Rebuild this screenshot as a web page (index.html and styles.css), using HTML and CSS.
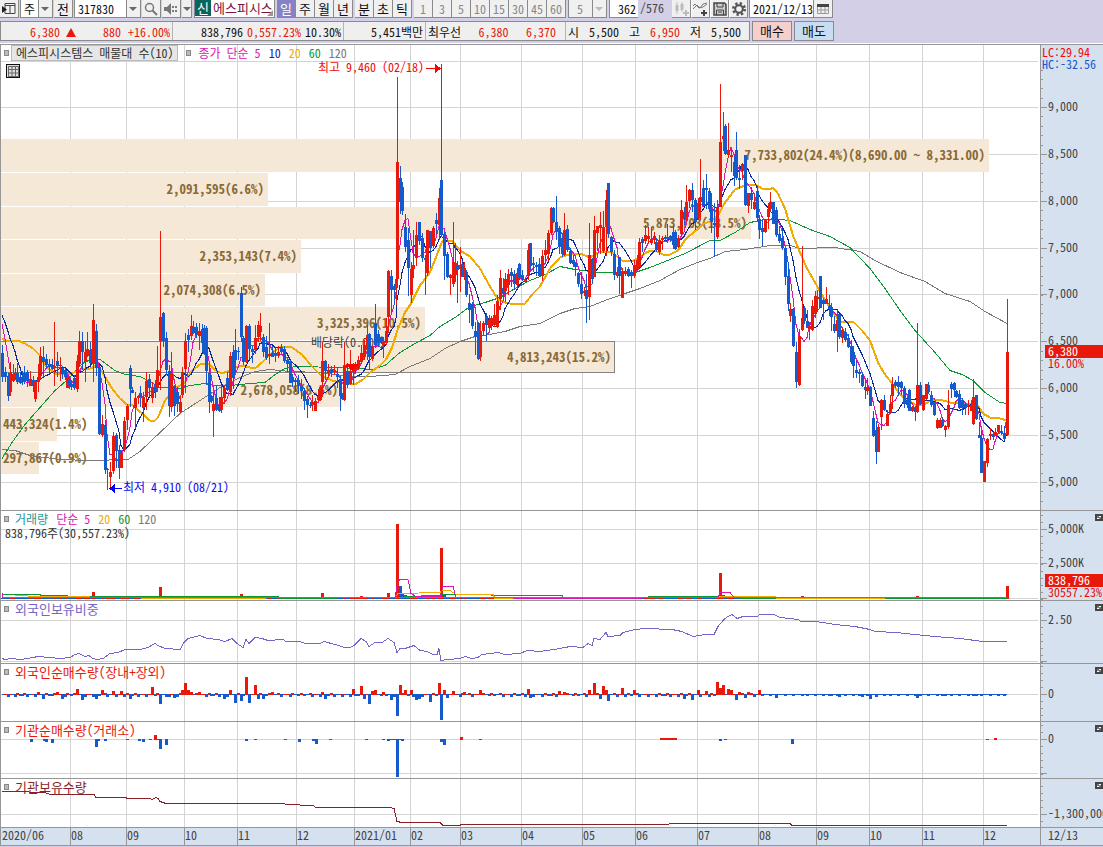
FILE: index.html
```html
<!DOCTYPE html>
<html lang="ko">

<head>
    <meta charset="UTF-8">
    <meta name="viewport" content="width=device-width, initial-scale=1.0">
    <title>에스피시스템스 317830</title>
    <link rel="stylesheet" href="styles.css">
</head>

<body>
    <div class="toolbar">
        <button class="tool wide" type="button" aria-label="창 목록">
            <svg width="14" height="13" viewBox="0 0 14 13"><path d="M3 1.500h10v10H3zM3 3.500h10M8 3.500v8" fill="none" stroke="#444" /><path d="M0 4l5 3.500-5 3.500z" fill="#222" /></svg>
        </button>
        <div class="combo period">
            <select aria-label="종류"><option>주</option></select>
        </div>
        <button class="tool wide" type="button">전</button>
        <div class="combo code">
            <input type="text" value="317830" aria-label="종목코드">
        </div>
        <button class="tool" type="button" aria-label="검색">
            <svg width="14" height="14" viewBox="0 0 14 14"><circle cx="5.500" cy="5.500" r="4" fill="none" stroke="#777" stroke-width="1.500" /><path d="M8.500 8.500l4.500 4.500" stroke="#777" stroke-width="2" /></svg>
        </button>
        <button class="tool" type="button" aria-label="음성">
            <svg width="14" height="12" viewBox="0 0 14 12"><path d="M0 4h3l4-4v12L3 8H0z" fill="#777" /><path d="M9 3v2M9 7v2M12 3v2M12 7v2" stroke="#555" stroke-width="1.500" /></svg>
        </button>
        <button class="tool slim" type="button" aria-label="음성 메뉴"><i class="down"></i></button>
        <div class="stock"><b>신</b><span>에스피시스</span></div>
        <div class="group">
            <button class="tool active" type="button">일</button>
            <button class="tool" type="button">주</button>
            <button class="tool" type="button">월</button>
            <button class="tool" type="button">년</button>
        </div>
        <div class="group">
            <button class="tool" type="button">분</button>
            <button class="tool" type="button">초</button>
            <button class="tool" type="button">틱</button>
        </div>
        <div class="group minutes">
            <button class="tool" type="button">1</button>
            <button class="tool" type="button">3</button>
            <button class="tool" type="button">5</button>
            <button class="tool" type="button">10</button>
            <button class="tool" type="button">15</button>
            <button class="tool" type="button">30</button>
            <button class="tool" type="button">45</button>
            <button class="tool" type="button">60</button>
        </div>
        <div class="combo tick off">
            <select aria-label="분 간격" disabled><option>5</option></select>
        </div>
        <div class="count">
            <input type="text" value="362" aria-label="봉 개수"><span>/576</span>
        </div>
        <div class="group icons">
            <button class="tool off" type="button" aria-label="봉 추가">
                <svg width="15" height="14" viewBox="0 0 15 14"><path d="M3 0v12M8 0v10" stroke="#bbb" /><path d="M1.500 3h3v6h-3zM6.500 2h3v6h-3zM11 8h2v2h2v2h-2v2h-2v-2H9v-2h2z" fill="#bbb" /></svg>
            </button>
            <button class="tool" type="button" aria-label="지표 추가">
                <svg width="15" height="14" viewBox="0 0 15 14"><path d="M0 7l4-4 3 3 3-4 4-1M0 4l2-2 4 4 4-1 4-3" fill="none" stroke="#777" /><path d="M10 8h2v2h2v2h-2v2h-2v-2H8v-2h2z" fill="#444" /></svg>
            </button>
            <button class="tool" type="button" aria-label="저장">
                <svg width="14" height="14" viewBox="0 0 14 14"><path d="M1 1h10.500L13 2.500V13H1z" fill="#ccc" stroke="#444" stroke-width="1.500" /><path d="M4 1v4h6V1M3.500 13V8h7v5M5 10h4" fill="none" stroke="#444" /></svg>
            </button>
            <button class="tool" type="button" aria-label="설정">
                <svg width="14" height="14" viewBox="0 0 14 14"><circle cx="7" cy="7" r="5.500" fill="none" stroke="#555" stroke-width="3" stroke-dasharray="2.200 2.120" /><circle cx="7" cy="7" r="3.800" fill="none" stroke="#555" stroke-width="2" /></svg>
            </button>
        </div>
        <div class="date">
            <input type="text" value="2021/12/13" aria-label="일자">
            <button class="tool" type="button" aria-label="달력">
                <svg width="12" height="11" viewBox="0 0 12 11"><path d="M0 1h12v3H0z" fill="#444" /><path d="M.5 4v6.500h11V4M4 4v6M8 4v6M1 7h10" fill="none" stroke="#999" /></svg>
            </button>
        </div>
    </div>

    <div class="quote">
        <div class="cells">
            <div class="cell price up"><span>6,380 <i class="rise"></i></span><span class="diff">880</span><span>+16.00%</span></div>
            <div class="cell volume"><span>838,796</span><span class="up">0,557.23%</span><span>10.30%</span></div>
            <div class="cell amount">5,451백만</div>
            <div class="cell best"><span>최우선</span><span class="up">6,380</span><span class="up">6,370</span></div>
            <div class="cell range"><span>시</span><span>5,500</span><span>고</span><span class="up">6,950</span><span>저</span><span>5,500</span></div>
        </div>
        <button class="order buy" type="button">매수</button>
        <button class="order sell" type="button">매도</button>
    </div>

    <main class="chart">
        <section class="panel main">
            <svg class="plot" data-top="45" data-height="465"></svg>
            <svg class="scale" data-top="45" data-height="465"></svg>
            <div class="legend">
                <i class="mark"></i><span class="box">에스피시스템스 매물대 수(10)</span>
                <i class="mark second"></i><span class="ma5">종가 단순 5</span><span class="ma10">10</span><span class="ma20">20</span><span class="ma60">60</span><span class="ma120">120</span>
            </div>
            <button class="grid-button" type="button" aria-label="데이터 표">
                <svg width="11" height="11" viewBox="0 0 11 11"><path d="M.5.5h10v10H.5zM.5 3.500h10M.5 7h10M4 .5v10M7.500.5v10" fill="none" stroke="#666" /></svg>
            </button>
        </section>
        <section class="panel vol">
            <svg class="plot" data-top="511" data-height="89"></svg>
            <svg class="scale" data-top="511" data-height="89"></svg>
            <div class="legend"><i class="mark"></i><span class="teal">거래량</span><span class="ma5">단순 5</span><span class="ma20">20</span><span class="ma60">60</span><span class="ma120">120</span></div>
            <div class="note">838,796주(30,557.23%)</div>
            <button class="close" type="button" aria-label="닫기"></button>
        </section>
        <section class="panel hold">
            <svg class="plot" data-top="601" data-height="62"></svg>
            <svg class="scale" data-top="601" data-height="62"></svg>
            <div class="legend name"><i class="mark"></i><span class="violet">외국인보유비중</span></div>
            <button class="close" type="button" aria-label="닫기"></button>
        </section>
        <section class="panel net">
            <svg class="plot" data-top="664" data-height="57"></svg>
            <svg class="scale" data-top="664" data-height="57"></svg>
            <div class="legend name"><i class="mark"></i><span class="up">외국인순매수량(장내+장외)</span></div>
            <button class="close" type="button" aria-label="닫기"></button>
        </section>
        <section class="panel inst">
            <svg class="plot" data-top="722" data-height="56"></svg>
            <svg class="scale" data-top="722" data-height="56"></svg>
            <div class="legend name"><i class="mark"></i><span class="up">기관순매수량(거래소)</span></div>
            <button class="close" type="button" aria-label="닫기"></button>
        </section>
        <section class="panel inst-hold">
            <svg class="plot" data-top="779" data-height="48"></svg>
            <svg class="scale" data-top="779" data-height="48"></svg>
            <div class="legend name"><i class="mark"></i><span class="wine">기관보유수량</span></div>
            <button class="close" type="button" aria-label="닫기"></button>
        </section>
        <section class="panel months">
            <svg class="plot" data-top="828" data-height="17"></svg>
            <svg class="scale" data-top="828" data-height="17"></svg>
        </section>
    </main>

    <script src="chart.js"></script>
</body>

</html>
```

FILE: styles.css
```css
* {
    box-sizing: border-box;
}

body {
    margin: 0;
    background-color: #d2cfe6;
    color: #111;
    font-family: "Liberation Sans Narrow", "Noto Sans Mono CJK KR", "Noto Sans CJK KR", sans-serif;
    font-size: 12px;
    line-height: 16px;
}

button,
input,
select {
    margin: 0;
    padding: 0;
    border: 0;
    border-radius: 0;
    background: none;
    color: inherit;
    font: inherit;
}

svg {
    display: block;
}

/* toolbar */
.toolbar {
    display: flex;
    height: 18px;
    gap: 1px;
    overflow: hidden;
    white-space: nowrap;
}

.tool {
    display: flex;
    align-items: center;
    justify-content: center;
    flex: none;
    width: 19px;
    height: 18px;
    background-color: #f0f0f0;
    border: solid #8a8a8a;
    border-width: 0 1px 1px 0;
    font-size: 13px;
}

.tool.slim {
    width: 10px;
}

.tool.active {
    background-color: #8782c4;
    color: #fff;
}

.down,
.combo::after {
    width: 0;
    border: 4px solid transparent;
    border-top-color: #666;
    border-bottom: 0;
}

.combo {
    display: flex;
    align-items: center;
    position: relative;
    flex: none;
    height: 18px;
    background-color: #fff;
    border: 1px solid #8a8a8a;
    border-top: 0;
}

.combo::after {
    content: "";
    position: absolute;
    right: 3px;
}

.combo select,
.combo input {
    appearance: none;
    width: 100%;
    height: 17px;
    padding-left: 3px;
    opacity: 1;
    background: linear-gradient(90deg, transparent calc(100% - 14px), #8a8a8a calc(100% - 14px), #8a8a8a calc(100% - 13px), #f0f0f0 calc(100% - 13px));
}

.period {
    width: 33px;
}

.code {
    width: 67px;
}

.tick {
    width: 39px;
    margin-left: 1px;
    color: #888;
}

.tick select {
    padding-left: 8px;
    background-color: #f0f0f0;
}

.off.combo::after {
    border-top-color: #bbb;
}

.stock {
    display: flex;
    position: relative;
    flex: none;
    width: 81px;
    height: 18px;
    margin-left: 1px;
    overflow: hidden;
    background-color: #fff;
    border: 1px solid #8a8a8a;
    border-top: 0;
    color: #7c1440;
    font-size: 13px;
    line-height: 16px;
}

.stock b {
    width: 16px;
    height: 16px;
    margin-right: 2px;
    background-color: #0a645c;
    color: #fff;
    font-weight: normal;
    text-align: center;
}

.stock::after {
    content: "";
    position: absolute;
    right: 1px;
    bottom: 1px;
    border: 3px solid #999;
    border-top-color: transparent;
    border-left-color: transparent;
}

.group {
    display: flex;
    flex: none;
    margin-left: 1px;
}

.minutes {
    color: #888;
}

.minutes .tool {
    font-size: 12px;
}

.count {
    display: flex;
    flex: none;
    width: 61px;
    margin-left: 1px;
    color: #444;
}

.count input {
    width: 29px;
    height: 18px;
    margin-right: 2px;
    padding-right: 2px;
    background-color: #fff;
    border-bottom: 1px solid #8a8a8a;
    border-left: 1px solid #8a8a8a;
    color: #111;
    text-align: right;
}

.icons .tool + .tool {
    border-left: 1px solid #fff;
}

.date {
    display: flex;
    flex: none;
}

.date input {
    width: 65px;
    height: 18px;
    padding-left: 3px;
    background-color: #fff;
    border: solid #8a8a8a;
    border-width: 0 1px 1px;
}

/* quote line */
.quote {
    display: flex;
    height: 26px;
    padding: 3px 0 3px;
    gap: 2px;
    border-bottom: 1px solid #fff;
    white-space: nowrap;
}

.cells {
    display: flex;
    height: 20px;
    background-color: #efefef;
    border: 1px solid #8a8a8a;
    line-height: 19px;
}

.cell {
    display: flex;
    justify-content: space-between;
    padding: 0 2px;
    border-right: 1px solid #b4b4b4;
}

.cell:last-child {
    border-right: 0;
}

.price {
    width: 172px;
    padding-left: 29px;
}

.diff {
    margin-left: 20px;
}

.volume {
    width: 171px;
    padding-left: 28px;
}

.amount {
    width: 82px;
    justify-content: flex-end;
}

.best {
    width: 140px;
    padding-right: 9px;
}

.range {
    width: 183px;
    padding-right: 8px;
}

.up {
    color: #e8190a;
}

.rise {
    display: inline-block;
    border: 5px solid transparent;
    border-top: 0;
    border-bottom: 9px solid #e8190a;
}

.order {
    width: 40px;
    height: 20px;
    border: 1px solid #8a8a8a;
    font-size: 13px;
}

.buy {
    background-color: #f4cfcb;
}

.sell {
    background-color: #c8ddf2;
}

/* chart */
.chart {
    background-color: #fff;
    border-left: 1px solid #969696;
    border-bottom: 1px solid #969696;
}

.panel {
    display: grid;
    grid-template-columns: minmax(0, 1fr) 63px;
    position: relative;
    border-top: 1px solid #969696;
}

.plot,
.scale {
    width: 100%;
    shape-rendering: crispEdges;
}

.scale {
    background-color: #d6e1f0;
    border-left: 1px solid #969696;
}

.months .plot {
    background-color: #d6e1f0;
}

.legend {
    display: flex;
    align-items: center;
    position: absolute;
    top: 0;
    left: 3px;
    gap: 8px;
    white-space: nowrap;
}

.legend.name {
    font-size: 13px;
}

.legend .mark {
    width: 5px;
    height: 6px;
    margin-right: -2px;
    background-color: #bbb;
    border: 1px solid #888;
}

.main .mark {
    margin-right: -6px;
}

.main .second {
    margin-right: -1px;
}

.box {
    padding: 0 4px;
    background-color: #e6e6e6;
    border: 1px solid #bbb;
    line-height: 14px;
    color: #333;
}

.note {
    position: absolute;
    top: 14px;
    left: 4px;
    color: #333;
}

.ma5 { color: #dc14b4; }
.ma10 { color: #0a28b4; }
.ma20 { color: #f0aa00; }
.ma60 { color: #0a9632; }
.ma120 { color: #787878; }
.teal { color: #289696; }
.violet { color: #7864c8; }
.wine { color: #8c1e28; }

.grid-button {
    display: flex;
    align-items: center;
    justify-content: center;
    position: absolute;
    top: 19px;
    left: 5px;
    width: 14px;
    height: 14px;
    border: 1px solid #111;
    background-color: #ddd;
}

.close {
    position: absolute;
    top: 3px;
    right: 0;
    width: 8px;
    height: 7px;
    background-color: #444;
    color: #fff;
}

.close::before {
    content: "";
    position: absolute;
    top: 2px;
    left: 2px;
    width: 4px;
    height: 3px;
    background: conic-gradient(#fff 25%, #777 0 50%, #fff 0 75%, #777 0);
}

.plot text,
.scale text {
    fill: #444;
}

.plot .band {
    fill: #f5e8d6;
}

.plot .band.picked {
    stroke: #828282;
}

.plot .share {
    fill: #8a6a36;
    font-size: 13px;
    font-weight: bold;
}

.grid {
    stroke: #d4d4d4;
}

.tickline {
    stroke: #969696;
}

.line {
    fill: none;
}

.scale .badge {
    fill: #e8190a;
}

.scale .on {
    fill: #fff;
}

.scale .rate,
.plot .high {
    fill: #f00a0a;
}

.scale .fall {
    fill: #145acd;
}

.plot .low {
    fill: #0a0af0;
}
```

FILE: chart.js
```javascript
const RED = '#e8190a';
const BLUE = '#145acd';
const BASE_WIDTH = 1039;

// x, up/down, high, body top, body bottom, low
const candles = `
2 b 345 353 377 382|5 b 367 372 377 382|8 b 373 376 396 401|10 r 362 373 392 396|13 r 364 374 381 382|15 r 368 373 380 380
17 b 363 373 382 384|20 b 372 377 383 384|22 b 371 379 382 385|24 b 366 373 382 384|27 b 370 372 381 387|30 r 371 379 386 386
33 b 376 380 386 392|35 r 380 381 399 402|38 r 364 377 382 392|40 r 347 356 376 380|43 b 346 357 362 377|46 b 354 359 365 368
49 b 359 364 367 374|52 b 359 365 369 370|54 r 322 367 368 386|57 b 352 361 366 377|60 r 357 365 366 381|62 b 366 368 374 379
65 b 368 370 377 380|67 r 375 377 388 388|69 b 377 379 385 389|71 b 381 384 387 390|74 b 375 378 388 390|77 r 355 361 389 392
79 r 331 341 364 366|82 b 332 341 352 370|85 r 341 352 362 382|87 r 332 349 356 357|90 b 342 350 363 364|93 r 304 320 364 382
96 b 324 331 368 376|99 b 365 367 434 435|102 r 415 424 435 437|105 b 420 425 470 474|107 r 468 469 470 490|110 r 462 472 477 490
113 r 432 436 471 474|116 b 433 435 451 468|119 b 445 450 468 479|121 r 450 453 468 468|124 r 417 421 450 452|127 r 404 406 420 430
130 b 365 368 389 407|132 b 387 390 393 393|135 r 392 398 408 428|138 r 395 396 398 404|140 b 386 393 398 407|143 r 392 397 408 422
146 r 372 381 397 410|149 b 374 379 388 397|152 r 382 387 398 403|155 b 380 384 392 398|157 r 346 370 388 392|160 r 231 317 341 390
163 b 312 313 341 347|166 b 332 338 370 375|169 b 365 371 406 417|171 r 352 373 407 412|174 b 385 386 406 416|177 b 387 392 404 412
180 r 396 402 412 413|182 r 367 372 395 398|185 r 333 341 369 393|188 b 329 335 340 352|191 r 315 326 336 340|193 b 321 327 333 334
196 b 323 327 335 338|199 r 323 331 336 350|202 b 324 329 343 352|204 b 325 328 354 355|206 b 326 328 371 385|209 b 366 373 402 413
211 b 395 396 401 403|213 r 392 404 411 437|216 b 386 398 410 411|219 b 397 405 411 412|221 r 386 397 410 413|224 r 385 388 398 404
227 b 372 378 390 391|230 r 352 356 392 396|233 b 345 352 378 389|235 b 329 350 360 373|238 b 347 351 352 360|241 b 287 293 337 342
243 b 336 338 362 365|246 r 325 326 362 363|249 b 324 326 349 359|252 b 346 349 352 363|255 r 325 338 350 354|258 r 321 325 337 342
260 r 313 326 332 341|263 b 334 337 352 357|266 b 336 347 358 360|269 r 323 354 356 364|272 b 346 353 357 357|275 b 348 353 355 362
278 r 346 352 355 358|281 b 344 347 352 354|284 b 346 349 361 363|287 b 359 360 364 372|290 b 360 362 383 383|292 b 374 377 382 387
295 b 378 380 382 392|298 b 375 380 386 394|301 b 379 386 391 399|304 b 388 391 401 410|307 b 396 399 405 418|310 b 402 405 406 408
312 r 395 402 405 411|315 r 398 401 411 411|318 r 389 396 400 402|320 r 386 387 400 401|322 r 342 361 382 397|325 b 360 361 371 380
328 r 364 370 373 377|331 b 366 369 373 377|334 r 365 370 372 375|337 b 367 374 377 388|340 b 376 379 396 411|342 b 393 396 399 400
344 r 342 365 400 401|347 b 363 371 385 388|350 r 350 371 384 385|353 r 363 365 372 385|355 r 362 364 370 374|358 r 356 360 368 370
361 r 345 353 362 364|364 r 340 345 357 360|367 r 325 335 350 360|369 b 333 334 357 370|372 r 346 347 359 361|375 b 304 323 345 348
378 b 330 334 343 347|381 b 337 337 343 344|383 r 337 341 345 358|386 r 318 331 343 345|388 r 270 271 317 333|391 b 270 276 290 313
394 b 284 286 290 305|396 r 278 279 288 305|397 r 77 162 279 288|400 b 166 178 202 214|402 b 182 187 211 215|405 b 214 227 247 252
408 b 228 240 268 296|411 r 262 269 295 303|413 r 230 265 269 278|416 r 222 235 258 266|419 b 222 222 241 245|422 b 233 238 258 262
425 b 255 258 260 295|427 r 230 230 273 276|430 b 231 231 248 268|433 r 226 228 246 248|436 b 213 220 224 234|439 r 188 198 225 240
441 b 64 180 235 237|444 b 232 234 256 280|447 b 252 254 277 278|450 r 274 275 278 295|453 r 222 262 284 287|455 r 243 263 275 282
457 b 261 265 270 303|460 r 247 265 269 292|462 b 261 264 277 277|464 r 262 268 274 280|466 b 270 272 295 297|469 b 294 303 310 323
472 b 302 304 326 329|475 b 322 331 337 355|478 b 322 323 359 360|480 r 321 331 357 361|483 r 321 323 331 335|486 b 313 316 325 341
489 r 315 320 328 329|491 r 316 318 325 330|494 r 304 315 325 327|497 r 295 301 327 328|500 r 270 278 299 310|503 b 278 288 294 301
505 r 273 279 291 302|508 r 269 274 285 295|511 b 268 272 276 287|514 b 270 274 284 290|517 r 268 273 285 289|519 b 263 264 277 280
522 b 270 275 280 281|525 r 278 280 282 283|528 r 244 250 276 280|530 b 243 243 266 270|533 b 257 263 265 272|536 b 262 265 267 276
539 b 258 264 276 277|542 r 250 256 276 281|545 r 240 250 255 264|548 r 230 233 254 261|551 r 207 208 233 235|553 b 207 208 222 223
556 b 196 222 232 240|559 b 226 228 247 254|562 b 233 238 254 257|564 r 213 230 255 256|567 b 225 229 250 252|570 b 248 251 263 264
573 b 255 260 264 267|575 b 262 263 267 276|578 b 272 273 284 287|581 b 272 284 294 299|584 r 287 291 293 296|586 b 274 290 299 323
589 r 223 255 297 320|592 b 258 259 279 284|594 r 216 230 277 277|597 r 226 226 233 251|600 r 212 225 228 254|603 r 211 227 251 253
606 r 190 200 224 256|608 b 183 183 234 238|611 b 236 237 252 256|614 b 250 254 275 280|617 r 267 272 276 278|619 b 257 257 276 294
622 r 268 271 298 298|625 r 267 271 274 276|628 b 267 269 276 277|631 b 270 272 276 288|634 r 260 265 276 278|637 r 255 260 270 272
639 r 238 242 267 268|642 b 237 239 243 252|645 r 225 235 241 244|648 r 227 236 239 243|651 r 227 240 243 245|654 r 232 236 240 244
656 b 238 242 250 252|659 r 235 240 252 255|662 r 236 238 240 250|665 b 235 237 239 242|667 b 224 237 239 243|670 b 235 236 240 242
673 b 226 232 245 249|675 b 230 232 249 250|678 r 235 238 247 248|681 r 200 210 234 236|684 b 207 212 219 225|686 r 185 202 220 222
689 r 189 190 201 208|692 b 183 190 200 212|695 b 198 200 222 230|698 r 198 203 218 220|700 r 159 197 202 220|703 b 180 188 206 207
706 b 174 188 190 209|709 b 188 191 209 212|711 b 193 209 222 233|714 b 203 223 225 257|717 r 200 207 237 239|720 r 84 142 207 207
723 r 112 136 139 151|725 b 124 126 154 155|728 r 123 150 155 158|731 r 148 155 157 172|734 b 155 162 176 186|736 b 132 150 178 180
739 b 165 178 180 189|742 r 163 164 171 180|745 b 155 155 205 206|748 r 193 193 206 213|751 b 187 193 200 209|754 r 193 202 209 210
757 b 186 191 218 221|759 b 215 219 230 239|762 b 219 228 232 246|765 r 219 220 232 233|768 r 203 209 217 229|770 r 192 202 209 212
773 b 202 202 224 224|776 b 207 210 235 237|779 b 226 234 241 243|782 b 229 238 248 250|785 b 248 248 277 285|788 b 262 276 304 311
790 r 303 309 316 322|793 b 308 309 346 347|796 b 342 352 382 388|799 r 329 336 385 386|802 r 246 318 330 331|804 b 306 308 321 324
807 b 310 321 328 328|809 r 322 326 329 340|812 r 300 306 330 331|815 r 291 296 314 318|817 r 290 297 299 312|820 b 276 276 308 308
823 b 298 300 304 320|826 r 287 299 304 304|829 b 295 306 309 316|831 b 303 307 317 331|834 b 316 324 331 333|837 r 310 320 331 352
839 b 314 314 337 339|842 r 327 330 338 343|845 b 328 332 340 342|848 b 334 338 347 348|851 b 340 346 362 364|853 b 346 352 366 378
856 b 361 370 373 378|859 b 369 372 374 383|862 b 372 375 386 387|865 b 380 387 390 399|867 r 378 387 391 395|870 b 386 387 406 406
873 b 411 418 436 437|876 b 421 430 452 464|878 r 424 427 452 452|881 r 399 400 417 430|884 b 395 400 410 411|887 r 410 414 426 426
890 r 395 404 413 414|892 r 377 384 396 409|895 b 380 382 386 388|898 b 376 382 387 396|901 b 381 382 388 395|904 b 386 388 404 408
907 b 397 400 405 408|909 b 389 390 411 411|912 r 406 407 411 412|915 b 407 408 412 421|917 r 323 385 412 413|920 b 382 385 404 405
923 r 395 395 410 411|926 r 384 384 399 400|928 b 382 385 392 394|931 b 391 395 405 407|934 b 402 402 415 416|937 r 418 420 428 429
940 r 418 420 428 428|942 b 418 420 426 427|945 r 425 426 430 437|948 r 390 405 427 429|951 b 382 384 389 398|954 b 382 383 390 397
956 b 390 391 397 398|959 b 390 394 408 409|962 b 398 400 408 415|965 b 402 404 408 415|968 r 400 406 407 415|971 r 400 405 411 411
973 r 379 397 424 425|976 b 395 395 419 420|979 b 422 435 438 438|981 b 431 438 473 473|984 r 461 461 482 482|987 r 438 439 463 467
990 r 428 434 436 440|993 b 432 434 437 440|995 r 428 432 436 436|998 r 425 425 432 433|1001 b 425 431 433 435|1004 b 426 433 439 440
1007 r 299 352 435 436`.trim().split(/[|\n]/).map(row => {
    const [x, side, high, top, bottom, low] = row.split(' ');
    return { x: +x, up: side === 'r', high: +high, top: +top, bottom: +bottom, low: +low };
});

const earlier = [306, 306, 306, 306, 306, 305, 308, 312, 318];

const ma20 = '2,338 5,340 18,340 25,343 33,348 40,355 45,365 55,373 70,374 80,369 90,368 97,365 105,376 112,388 120,398 127,404 133,405 142,413 150,420 154,421 158,417 165,400 175,388 185,382 192,370 200,364 208,363 216,370 222,373 230,370 240,365 255,368 262,362 272,352 282,346 292,347 302,354 312,366 320,374 332,380 345,383 355,384 363,379 370,372 380,365 386,359 392,347 398,328 405,312 411,303 420,285 430,272 437,254 442,241 452,240 460,250 470,256 480,268 490,286 498,299 505,302 515,304 525,303 533,293 540,286 550,268 560,257 572,253 580,253 590,257 600,251 612,252 622,260 632,261 642,255 650,250 657,251 663,254 670,254 678,250 686,238 696,230 704,223 710,221 718,215 725,202 735,189 745,185 755,184 762,188 770,189 773,187 778,193 785,208 793,235 800,252 807,268 815,282 823,296 833,312 840,321 853,321 862,330 870,340 878,362 885,374 893,384 900,394 908,400 915,404 923,405 930,400 940,399 950,402 965,403 977,404 983,413 990,417 1000,418 1007,420';
const ma60 = '2,458 12,442 25,424 40,407 55,390 70,377 80,365 90,359 100,359 115,370 125,374 140,376 150,381 160,387 170,387 180,388 190,385 205,383 215,385 230,385 250,383 265,382 275,374 285,368 296,366 340,367 372,369 385,365 400,352 415,343 430,335 440,326 455,317 470,306 485,302 500,297 515,288 530,280 545,274 560,266 575,269 600,272 635,272 650,267 665,261 685,253 710,240 720,240 735,232 750,222 765,219 780,219 790,220 810,229 830,236 850,247 870,268 885,288 900,310 915,330 925,341 935,352 950,370 962,374 973,380 985,392 1000,402 1007,403';
const ma120 = '2,449 15,450 30,455 60,459 90,460 128,459 140,451 160,432 180,413 200,400 220,387 240,377 255,371 270,369 290,371 320,372 350,376 370,376 395,374 410,366 430,358 445,348 460,341 475,336 490,334 505,331 520,326 540,323 560,313 575,308 590,306 605,300 625,293 640,288 660,280 680,269 700,261 710,258 725,251 745,249 770,245 790,245 800,248 835,247 860,251 875,260 900,272 925,281 945,293 970,301 985,311 1007,323';

const foreignHold = '2,658 5,659 12,658 20,659 28,658 38,656 50,657 60,658 70,657 75,654 79,653 85,656 89,655 93,658 97,659 103,658 110,653 118,652 125,649 140,649 148,647 155,643 158,645 165,648 180,649 184,642 188,638 200,635 207,638 218,639 225,641 232,638 237,643 243,647 246,639 249,643 255,637 262,638 268,640 283,639 286,641 300,641 305,643 320,643 324,641 335,644 345,647 350,647 354,645 361,638 366,641 369,646 375,642 382,642 388,638 394,642 397,652 400,648 405,648 414,645 420,650 427,651 433,654 437,654 439,648 441,660 448,659 460,658 465,656 472,658 478,657 482,654 498,652 505,654 520,653 527,650 540,651 560,648 570,646 583,647 588,643 592,645 594,638 600,639 606,632 608,636 620,635 623,632 635,629 645,628 672,629 682,631 693,636 705,634 714,634 718,626 724,619 728,616 732,614 737,618 743,616 757,616 760,614 774,614 780,617 798,619 801,621 816,621 835,624 855,626 870,629 875,631 897,632 905,633 915,634 925,635 935,636 960,638 983,641 1007,641';
const instHold = '2,791 28,791 30,792 45,792 50,794 94,794 96,797 126,797 127,798 150,798 152,799 156,797 158,798 160,801 166,803 284,803 286,804 313,805 316,807 390,807 394,808 397,821 402,822 440,822 443,825 460,825 461,824 668,824 670,823 790,823 792,825 1007,825';

const months = [[1, '2020/06'], [70, '08'], [126, '09'], [184, '10'], [237, '11'], [296, '12'], [354, '2021/01'], [410, '02'], [460, '03'], [521, '04'], [582, '05'], [635, '06'], [697, '07'], [758, '08'], [816, '09'], [869, '10'], [922, '11'], [983, '12']];

// top, bottom, width, label
const bands = [
    [139, 172, 989, '7,733,802(24.4%)(8,690.00 ~ 8,331.00)'],
    [173, 206, 268, '2,091,595(6.6%)'],
    [207, 239, 751, '5,873,703(18.5%)'],
    [240, 273, 301, '2,353,143(7.4%)'],
    [274, 306, 265, '2,074,308(6.5%)'],
    [307, 340, 425, '3,325,396(10.5%)'],
    [341, 373, 615, '4,813,243(15.2%)'],
    [374, 407, 342, '2,678,058(8.5%)'],
    [408, 441, 57, '443,324(1.4%)'],
    [442, 474, 39, '297,867(0.9%)']
];

const foreignNet = { 29: 2, 32: -2, 38: 3, 43: -4, 57: 3, 62: -4, 77: 6, 82: -5, 88: 3, 91: -5, 96: -4, 102: 5, 113: 4, 118: -3, 121: 4, 126: 3, 130: -4, 152: 8, 160: -9, 166: -2, 174: -3, 182: 5, 185: 12, 188: 5, 191: 3, 199: 3, 205: -3, 208: -3, 224: -4, 230: 5, 235: -8, 241: -6, 246: 18, 249: -8, 255: 10, 258: -4, 263: -4, 272: 3, 285: -5, 322: 3, 325: -4, 338: -4, 353: 6, 361: 9, 364: -4, 369: -9, 372: 4, 375: 5, 383: 3, 391: -5, 397: -21, 400: 10, 405: 5, 411: 5, 416: -5, 419: -4, 430: -7, 439: 12, 441: -25, 444: 5, 447: -3, 453: 4, 464: 3, 480: 5, 528: 6, 530: -3, 559: 4, 564: 3, 589: 5, 594: 12, 600: -4, 603: 9, 606: 5, 608: -6, 622: 7, 634: 5, 684: -4, 692: -5, 698: 5, 706: 4, 717: 13, 720: 7, 723: 10, 728: 6, 731: 5, 736: -5, 739: 3, 745: -3, 748: 3, 759: 5, 776: -3, 787: -3, 801: -6, 839: -2, 862: -2, 870: -4, 876: -2, 917: -3 };
const instNet = [[31, -3], [44, -2], [46, -3], [52, -4], [96, -8], [98, -2], [105, -2], [127, -1], [139, -2], [143, -3], [150, -1], [155, 5], [157, -1], [160, -10], [166, -6], [246, -2], [255, -1], [285, -1], [299, -3], [313, -2], [316, -5], [330, -1], [366, -1], [383, -1], [388, -2], [391, -1], [394, -1], [397, -38], [400, 1], [402, -2], [441, -3], [444, -6], [461, 3], [480, -1], [720, -2], [725, -1], [792, -5], [987, -1], [995, 2]];
const volumes = { 93: 7, 160: 12, 241: 5, 322: 6, 361: 3, 388: 6, 397: 75, 400: 13, 402: 6, 405: 4, 441: 51, 444: 5, 720: 26, 723: 4, 802: 3, 917: 3, 1007: 13 };
// days when volume grew although the candle is down
const busyDays = [241, 441];

const levels = {
    main: [61, 107, 154, 201, 248, 294, 341, 388, 435, 482],
    vol: [529, 563, 598],
    hold: [620, 661],
    net: [694],
    inst: [739, 773],
    'inst-hold': [814]
};

const labels = {
    main: [[107, '9,000'], [154, '8,500'], [201, '8,000'], [248, '7,500'], [294, '7,000'], [341, '6,500'], [388, '6,000'], [435, '5,500'], [482, '5,000']],
    vol: [[529, '5,000K'], [563, '2,500K']],
    hold: [[620, '2.50']],
    net: [[694, '0']],
    inst: [[739, '0']],
    'inst-hold': [[814, '-1,300,000']]
};

let k = 1;
const px = x => Math.round(1 + (x - 1) * k);

function rect(x, y, w, h, fill) {
    return `<rect x="${px(x)}" y="${y}" width="${w}" height="${h}" fill="${fill}"/>`;
}

function line(x1, y1, x2, y2, cls) {
    return `<path class="${cls}" d="M${x1} ${y1 + 0.5}L${x2} ${y2 + 0.5}"/>`;
}

function text(x, y, value, cls = '', anchor = 'start') {
    return `<text x="${x}" y="${y}" class="${cls}" text-anchor="${anchor}">${value}</text>`;
}

function curve(points, color, width = 1) {
    const scaled = points.split(' ').map(p => {
        const [x, y] = p.split(',');
        return px(+x) + ',' + (+y + 0.5);
    }).join(' ');
    return `<polyline class="line" points="${scaled}" stroke="${color}" stroke-width="${width}"/>`;
}

function average(days) {
    const closes = earlier.concat(candles.map(c => c.up ? c.top : c.bottom));
    return candles.map((c, i) => {
        const part = closes.slice(i + earlier.length - days + 1, i + earlier.length + 1);
        return c.x + ',' + Math.round(part.reduce((a, b) => a + b) / days);
    }).join(' ');
}

function drawMain() {
    let out = '';
    bands.forEach(([top, bottom, width], i) => {
        const picked = i === 6;
        out += `<rect class="band${picked ? ' picked' : ''}" x="${picked ? 0.5 : 1}" y="${top + (picked ? 0.5 : 0)}" width="${px(width) - 1}" height="${bottom - top - (picked ? 1 : 0)}"/>`;
    });
    bands.forEach(([top, , width, label]) => {
        out += width < 100 ? text(3, top + 21, label, 'share') : text(px(width) - 4, top + 21, label, 'share', 'end');
    });
    out += text(px(311), 347, '배당락(0.00%)');
    out += curve(ma120, '#787878') + curve(ma60, '#0a9632') + curve(ma20, '#f0aa00', 2);
    out += curve(average(10), '#0a28a0') + curve(average(5), '#dc14b4');
    candles.forEach(c => {
        const color = c.up ? RED : BLUE;
        out += rect(c.x, c.high, 1, c.low - c.high, color);
        out += rect(c.x - 1, c.top, 3, Math.max(1, c.bottom - c.top), color);
    });
    out += text(px(424), 72, '최고 9,460 (02/18)', 'high', 'end');
    out += `<path d="M${px(426)} 68h9v-4l6 4.500-6 4.500v-4h-9z" fill="#f00"/>`;
    out += text(px(123), 492, '최저 4,910 (08/21)', 'low');
    out += `<path d="M${px(122)} 488h-7v-4l-6 4.500 6 4.500v-4h7z" fill="#00f"/>`;
    out += `<path d="M${px(346)} 364h12v3h-3l-3 4-3-4h-3z" fill="#f00"/>`;
    return out;
}

function drawVolume() {
    let out = '';
    candles.forEach(c => {
        const h = volumes[c.x] || 1;
        out += rect(c.x - 1, 599 - h, 3, h, c.up || busyDays.includes(c.x) ? RED : BLUE);
    });
    out += curve('2,594 40,594 41,595 95,596 278,596 280,598 395,597 430,595 455,594 490,594 492,595 562,595 563,597 735,596 740,598 885,598 1007,598', '#0a9632');
    out += curve('15,595 40,596 140,597 142,598 395,597 398,593 440,592 442,590 450,590 456,594 493,594 495,598 660,597 718,597 720,596 775,596 777,598 885,598', '#f0aa00');
    out += curve('2,593 3,597 395,597 398,580 401,579 408,579 411,593 416,596 440,596 443,586 453,586 456,597 568,598 718,597 720,592 730,592 734,597', '#dc14b4');
    out += curve('2,597 1007,597', '#787878');
    return out;
}

function drawNet() {
    let out = rect(2, 694, px(1005), 1, BLUE);
    candles.forEach((c, i) => {
        const wave = Math.sin(i * 2.3);
        const h = foreignNet[c.x] || Math.round(c.x > 760 ? wave * 0.7 - 0.3 : wave * 2);
        if (h === 0) return;
        out += h > 0 ? rect(c.x - 1, 695 - h, 3, h, RED) : rect(c.x - 1, 694, 3, 1 - h, BLUE);
    });
    return out;
}

function drawInst() {
    return instNet.map(([x, h]) => h > 0 ? rect(x - 1, 740 - h, 3, h, RED) : rect(x - 1, 739, 3, -h, BLUE)).join('')
        + rect(660, 738, px(677) - px(660), 2, RED);
}

const painters = {
    main: drawMain,
    vol: drawVolume,
    hold: () => curve(foreignHold, '#7864c8'),
    net: drawNet,
    inst: drawInst,
    'inst-hold': () => curve(instHold, '#8c1e28'),
    months: () => months.map(([x, label]) => text(px(x) + 1, 840, label)).join('')
};

function drawScale(name, top, height) {
    let out = '';
    if (name === 'months') return text(7, 840, '12/13');
    const step = name === 'main' ? 9.375 : 7;
    const start = levels[name][name === 'main' ? 1 : 0];
    for (let i = -70; i < 70; i++) {
        const y = Math.round(start + i * step);
        if (y > top && y < top + height && !(name === 'main' && y < 64)) out += line(0, y, 2, y, 'tickline');
    }
    levels[name].slice(name === 'main' ? 1 : 0).forEach(y => out += line(0, y, 6, y, 'tickline'));
    labels[name].forEach(([y, label]) => out += text(7, y + 4, label));
    if (name === 'main') {
        out += text(1, 57, 'LC:29.94', 'rate') + text(1, 69, 'HC:-32.56', 'fall');
        out += '<rect class="badge" x="4" y="345" width="58" height="13"/>' + text(7, 356, '6,380', 'on') + text(7, 368, '16.00%', 'rate');
    }
    if (name === 'vol') {
        out += '<rect class="badge" x="4" y="574" width="58" height="13"/>' + text(7, 585, '838,796', 'on') + text(7, 597, '30557.23%', 'rate');
    }
    return out;
}

function draw() {
    document.querySelectorAll('.panel').forEach(panel => {
        const name = panel.classList[1];
        const plot = panel.querySelector('.plot');
        const scale = panel.querySelector('.scale');
        const top = +plot.dataset.top;
        const height = +plot.dataset.height;
        plot.style.height = scale.style.height = height + 'px';
        const width = plot.clientWidth || plot.getBoundingClientRect().width;
        k = width / BASE_WIDTH;
        plot.setAttribute('viewBox', `1 ${top} ${width} ${height}`);
        scale.setAttribute('viewBox', `0 ${top} 62 ${height}`);
        let grid = '';
        const cls = name === 'months' ? 'tickline' : 'grid';
        months.slice(1).forEach(([x]) => grid += `<path class="${cls}" d="M${px(x) + 0.5} ${top}v${height}"/>`);
        (levels[name] || []).forEach(y => grid += line(1, y, width - 1, y, 'grid'));
        plot.innerHTML = grid + painters[name]();
        scale.innerHTML = drawScale(name, top, height);
    });
}

draw();
window.addEventListener('resize', draw);
```
